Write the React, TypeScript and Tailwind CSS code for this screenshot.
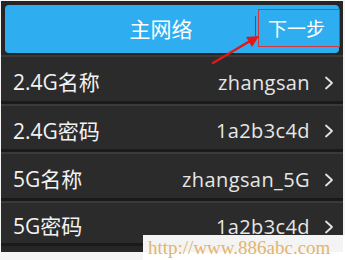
import React from 'react'

const rows = [
  { label: '2.4G名称', value: 'zhangsan', h: 'h-[46px]' },
  { label: '2.4G密码', value: '1a2b3c4d', h: 'h-[45px]' },
  { label: '5G名称', value: 'zhangsan_5G', h: 'h-[46px]' },
  { label: '5G密码', value: '1a2b3c4d', h: 'h-[42px]' },
]

function Chevron() {
  return (
    <svg width="10" height="14" viewBox="0 0 10 14" className="shrink-0">
      <path d="M2 1.5 L8 7 L2 12.5" fill="none" stroke="#e4e4e4" strokeWidth="1.8" strokeLinecap="round" strokeLinejoin="round" />
    </svg>
  )
}

export default function App() {
  return (
    <div
      className="relative w-[345px] h-[260px] overflow-hidden bg-[#f4f4f4]"
      style={{ fontFamily: '"Open Sans", "Noto Sans CJK SC", sans-serif' }}
    >
      {/* Phone screen */}
      <div className="ml-[1px] mt-[1px] w-[342px] h-[251px] overflow-hidden bg-[#262626] flex flex-col">
        {/* Header */}
        <div className="mx-[4px] mt-[4px] h-[48px] shrink-0 rounded-[4px] bg-[#2eaef0] flex items-center">
          <div className="flex-1 pl-[62px] text-center text-[21px] text-white leading-none">主网络</div>
          <div className="w-[1px] h-[20px] bg-[#3a5a70] self-center -mt-[6px]" />
          <div className="w-[83px] text-center text-[19px] text-white leading-none pr-[2px]">下一步</div>
        </div>

        {/* List */}
        <div className="mt-[2px] flex flex-col">
          {rows.map((r) => (
            <div key={r.label}>
              <div className={`${r.h} flex items-center bg-[#2b2b2b] border-t-2 border-[#3a3a3a] pt-[7px] pl-[12px] pr-[9px]`}>
                <span className="text-[21px] text-[#f2f2f2] leading-none">{r.label}</span>
                <span className="ml-auto text-[20px] text-[#e6e6e6] leading-none tracking-[0.4px]">{r.value}</span>
                <span className="ml-[14px]">
                  <Chevron />
                </span>
              </div>
              <div className="h-[3px] bg-[#1a1a1a]" />
            </div>
          ))}
        </div>
      </div>

      {/* Annotation box */}
      <div className="absolute left-[258px] top-[9px] w-[82px] h-[38px] border-[1.5px] border-[#d23a3a]" />

      {/* Annotation arrow */}
      <svg className="absolute left-0 top-0" width="345" height="260" viewBox="0 0 345 260">
        <line x1="213" y1="63" x2="250" y2="41" stroke="#e01818" strokeWidth="2.5" strokeLinecap="round" />
        <polygon points="259,36 246,37 252,47" fill="#e01818" />
      </svg>

      {/* Watermark */}
      <div className="absolute left-[143px] top-[235px] w-[202px] h-[25px] bg-white/95 flex items-center pl-[5px]">
        <span
          className="text-[19px] text-[#e3b46e] leading-none whitespace-nowrap"
          style={{ fontFamily: '"Liberation Serif", serif' }}
        >
          http://www.886abc.com
        </span>
      </div>
    </div>
  )
}
